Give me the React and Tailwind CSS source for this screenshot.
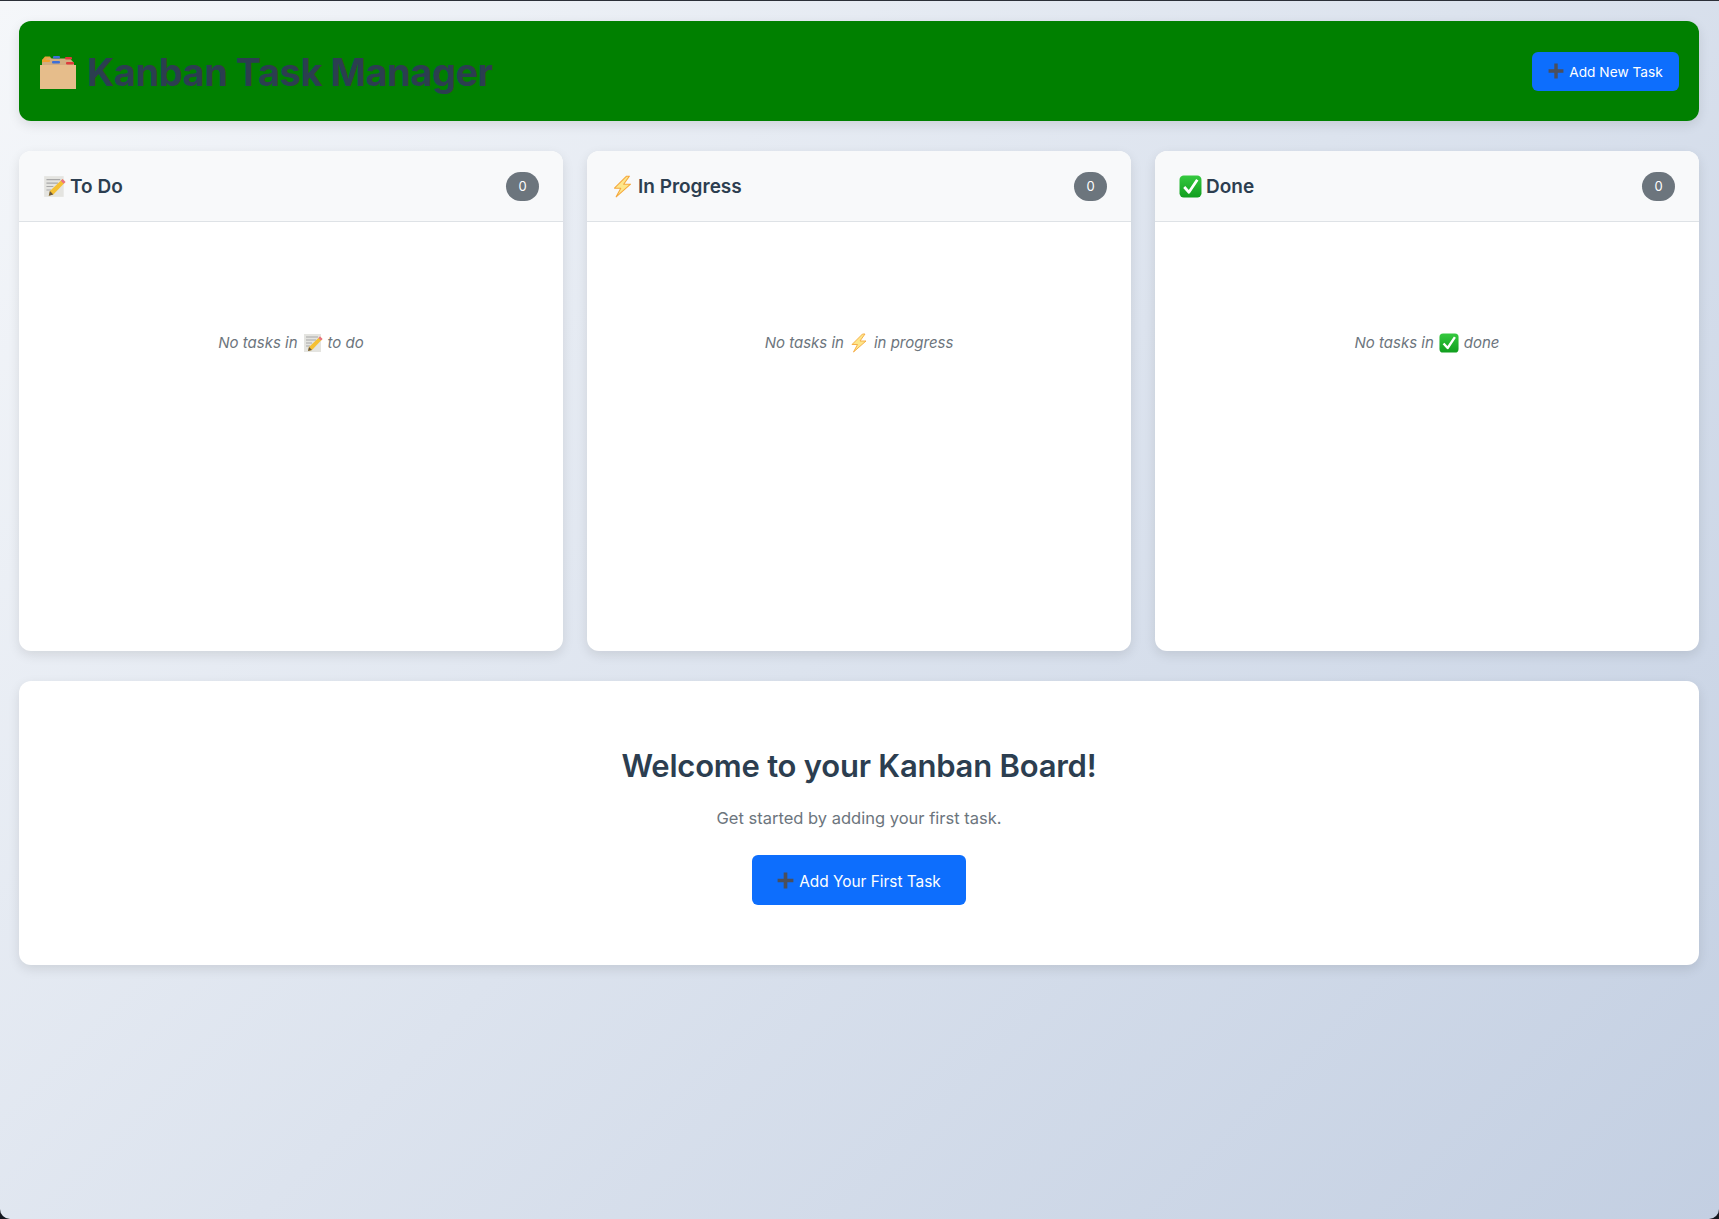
import React from 'react';

const FileBoxIcon = ({ className }) => (
  <svg viewBox="0 0 38 38" className={className}>
    <path d="M3 8 L6 4.5 L11 4.5 L14 9 L3 12 Z" fill="#e8a33d" />
    <path d="M3 11 L8 6.5 H31 L35 11 V14 H3 Z" fill="#d2ad80" />
    <rect x="1" y="13" width="36" height="24" fill="#e6bd8b" />
    <rect x="3" y="7.5" width="8" height="2.5" rx="1" fill="#f0a030" />
    <rect x="14" y="4" width="7" height="2.5" rx="1" fill="#3d6fd8" />
    <rect x="13" y="9" width="8" height="2.5" rx="1" fill="#3d6fd8" />
    <rect x="26" y="5" width="7" height="2.5" rx="1" fill="#df3b3b" />
    <rect x="27" y="10" width="8" height="2.5" rx="1" fill="#df3b3b" />
  </svg>
);

const MemoIcon = ({ className }) => (
  <svg viewBox="0 0 20 20" className={className}>
    <rect x="1" y="1" width="17" height="18" fill="#e4e4e0" />
    <path d="M3 4 H15 M3 7 H13 M3 10 H9 M3 13 H7" stroke="#a8a8a8" strokeWidth="1" />
    <path d="M17 3.5 L19.5 6 L9 17 L5 18 L6 14 Z" fill="#f5c033" />
    <path d="M17 3.5 L19.5 6 L18 7.5 L15.5 5 Z" fill="#e8708a" />
    <path d="M6 14 L9 17 L5 18 Z" fill="#6b5a40" />
  </svg>
);

const BoltIcon = ({ className }) => (
  <svg viewBox="0 0 20 20" className={className}>
    <path d="M13.5 1 L3 11.5 H8.5 L4.5 19 L17 8 H11 L16 1 Z" fill="#fde68a" stroke="#f5a83c" strokeWidth="0.9" strokeLinejoin="round" />
  </svg>
);

const CheckIcon = ({ className }) => (
  <svg viewBox="0 0 22 22" className={className}>
    <defs>
      <linearGradient id="check-fill" x1="0" y1="0" x2="0" y2="1">
        <stop offset="0" stopColor="#35c93f" />
        <stop offset="1" stopColor="#119e1e" />
      </linearGradient>
    </defs>
    <rect x="0.5" y="0.5" width="21" height="21" rx="4" fill="url(#check-fill)" />
    <path d="M5 11.5 L9.5 16.5 L17.5 4.5" fill="none" stroke="#ffffff" strokeWidth="2.6" strokeLinejoin="round" />
  </svg>
);

const PlusIcon = ({ className }) => (
  <svg viewBox="0 0 14 14" className={className}>
    <path d="M5.5 0.5 H8.5 V5.5 H13.5 V8.5 H8.5 V13.5 H5.5 V8.5 H0.5 V5.5 H5.5 Z" fill="#4a4f5c" />
  </svg>
);

const columns = [
  { title: 'To Do', empty: 'to do', Icon: MemoIcon },
  { title: 'In Progress', empty: 'in progress', Icon: BoltIcon },
  { title: 'Done', empty: 'done', Icon: CheckIcon },
];

const Column = ({ title, empty, Icon }) => (
  <div className="bg-white rounded-xl overflow-hidden shadow-[0_4px_12px_rgba(0,0,0,0.1)] h-[500px]">
    <div className="h-[71px] px-6 bg-[#f8f9fa] border-b border-[#dee2e6] flex items-center justify-between">
      <h3 className="flex items-center gap-[4px] text-[19px] font-semibold text-[#2c3e50]">
        <Icon className="w-[23px] h-[23px]" />
        <span className="pt-[2px]">{title}</span>
      </h3>
      <span className="w-[33px] h-[29px] pt-[1px] rounded-full bg-[#6c757d] text-white text-[13px] flex items-center justify-center">0</span>
    </div>
    <div className="pt-[109px] flex items-center justify-center gap-[5px] text-[15px] leading-6 italic text-[#6c757d]">
      <span>No tasks in</span>
      <Icon className="w-5 h-5" />
      <span>{empty}</span>
    </div>
  </div>
);

export default function App() {
  return (
    <div className="min-h-screen flex border-t border-[#2b2f38] bg-[#15181f]">
      <div className="w-full rounded-b-[10px] bg-[linear-gradient(135deg,#f5f7fa_0%,#c3cfe2_100%)] pl-[19px] pr-5 pt-5 font-['Inter',sans-serif]">
        <header className="h-[100px] px-5 bg-[#008000] rounded-xl shadow-[0_4px_12px_rgba(0,0,0,0.1)] flex items-center justify-between">
          <h1 className="flex items-center gap-[10px] text-[38px] tracking-[-0.46px] font-bold text-[#2c3e50]">
            <FileBoxIcon className="w-[38px] h-[38px]" />
            <span className="pt-[3px]">Kanban Task Manager</span>
          </h1>
          <button className="h-[39px] w-[147px] bg-[#0d6efd] text-white text-[13.7px] rounded-md flex items-center justify-center gap-[5px]">
            <PlusIcon className="w-4 h-4" />
            <span className="pt-[3px]">Add New Task</span>
          </button>
        </header>

        <div className="mt-[30px] grid grid-cols-3 gap-6">
          {columns.map(col => (
            <Column key={col.title} {...col} />
          ))}
        </div>

        <div className="mt-[30px] h-[284px] bg-white rounded-xl shadow-[0_4px_12px_rgba(0,0,0,0.1)] flex flex-col items-center pt-[65px]">
          <h2 className="text-[31px] tracking-[-0.23px] leading-[40px] font-semibold text-[#2c3e50]">Welcome to your Kanban Board!</h2>
          <p className="mt-[18px] text-[16.5px] leading-7 text-[#6c757d]">Get started by adding your first task.</p>
          <button className="mt-[23px] h-[50px] w-[214px] bg-[#0d6efd] text-white text-[15.4px] rounded-md flex items-center justify-center gap-[5px]">
            <PlusIcon className="w-[17px] h-[17px]" />
            <span className="pt-[3px]">Add Your First Task</span>
          </button>
        </div>
      </div>
    </div>
  );
}
